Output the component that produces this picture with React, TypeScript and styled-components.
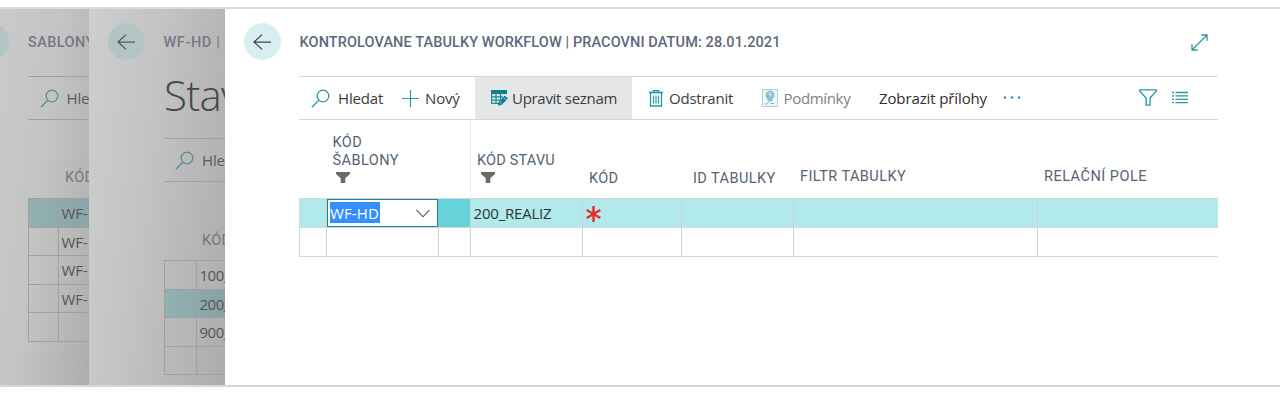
import React from 'react';
import styled, { createGlobalStyle } from 'styled-components';

const Global = createGlobalStyle`
  * { box-sizing: border-box; }
  body { margin: 0; background: #fff; }
`;

const ui = `'Open Sans', 'Noto Sans', sans-serif`;
const din = `Roboto, 'Liberation Sans', sans-serif`;

const Stage = styled.main`
  display: flex;
  width: 1280px;
  height: 380px;
  margin-top: 7px;
  border-top: 2px solid #dadada;
  border-bottom: 2px solid #d8d8d8;
  overflow: hidden;
  font-family: ${ui};
  font-size: 15px;
  color: #333;
`;

const Panel = styled.section<{ $width: number; $shade?: string; $inset: number }>`
  flex: none;
  width: ${p => p.$width}px;
  height: 376px;
  padding-left: ${p => p.$inset}px;
  overflow: hidden;
  background: ${p => p.$shade ?? '#fff'};
`;

const TopBar = styled.header<{ $gap: number; $pull: number }>`
  display: flex;
  align-items: center;
  height: 67px;
  margin-left: -${p => p.$pull}px;
  gap: ${p => p.$gap}px;
`;

const Back = styled.button<{ $dim?: boolean }>`
  flex: none;
  display: grid;
  place-items: center;
  width: 37px;
  height: 37px;
  margin-bottom: 2px;
  padding: 0;
  border: 0;
  border-radius: 50%;
  background: ${p => (p.$dim ? '#b3c4c5' : '#d8eff1')};
  color: ${p => (p.$dim ? '#565858' : '#444')};
`;

const Crumb = styled.h1<{ $dim?: boolean; $track?: number }>`
  flex: 1;
  margin: 0;
  font: 500 14.5px/20px ${din};
  letter-spacing: ${p => p.$track ?? 0}px;
  white-space: nowrap;
  color: ${p => (p.$dim ? '#747982' : '#5d697b')};
`;

const Expand = styled.span`
  display: flex;
  margin-right: 72px;
  color: #2a989e;
`;

const BigTitle = styled.h2`
  height: 62px;
  margin: 0;
  font: 300 42px/38px ${ui};
  letter-spacing: -0.7px;
  white-space: nowrap;
  color: #474747;
`;

const Toolbar = styled.nav<{ $dim?: boolean; $width?: number }>`
  display: flex;
  height: 44px;
  width: ${p => (p.$width ? p.$width + 'px' : 'auto')};
  border-top: 1px solid ${p => (p.$dim ? '#a0a0a0' : '#d4d5d9')};
  border-bottom: 1px solid ${p => (p.$dim ? '#a0a0a0' : '#d4d5d9')};
`;

const Action = styled.button<{ $width: number; $pad: number; $gap?: number; $active?: boolean; $color?: string; $track?: number }>`
  flex: none;
  display: flex;
  align-items: center;
  gap: ${p => p.$gap ?? 6}px;
  width: ${p => p.$width}px;
  padding: 0 0 0 ${p => p.$pad}px;
  border: 0;
  background: ${p => (p.$active ? '#e4e6e8' : 'transparent')};
  font: 15px/20px ${ui};
  letter-spacing: ${p => p.$track ?? 0}px;
  white-space: nowrap;
  color: ${p => p.$color ?? '#3c3c3c'};
  svg { flex: none; }
`;

const Tools = styled.div`
  display: flex;
  align-items: center;
  gap: 15px;
  margin-left: auto;
  padding-right: 30px;
  padding-bottom: 1px;
  color: #2a989e;
`;

const HeadRow = styled.div<{ $height: number }>`
  display: flex;
  height: ${p => p.$height}px;
`;

const Head = styled.div<{ $width: number; $pad?: number; $bottom: number; $rule?: boolean; $dim?: boolean; $track?: number }>`
  flex: none;
  display: flex;
  flex-direction: column;
  justify-content: flex-end;
  width: ${p => p.$width}px;
  padding: 0 0 ${p => p.$bottom}px ${p => p.$pad ?? 0}px;
  border-left: ${p => (p.$rule ? '1px solid #ededee' : '0')};
  font: 14.5px/18px ${din};
  letter-spacing: ${p => p.$track ?? 0}px;
  white-space: nowrap;
  color: ${p => (p.$dim ? '#717680' : '#566275')};
  svg { margin: 2px 0 0 3.5px; }
`;

const Grid = styled.div<{ $dim?: boolean; $width?: number }>`
  width: ${p => (p.$width ? p.$width + 'px' : 'auto')};
  border-top: 1px solid ${p => (p.$dim ? '#a0a0a0' : '#d6d7da')};
  border-left: 1px solid ${p => (p.$dim ? '#a0a0a0' : '#d6d7da')};
`;

const Row = styled.div<{ $fill?: string; $dim?: boolean; $height?: number }>`
  display: flex;
  height: ${p => p.$height ?? 28.5}px;
  background: ${p => p.$fill ?? 'transparent'};
  border-bottom: 1px solid ${p => (p.$dim ? '#a0a0a0' : '#d6d7da')};
`;

const Cell = styled.div<{ $width: number; $fill?: string; $dim?: boolean; $last?: boolean; $track?: number }>`
  flex: none;
  display: flex;
  align-items: center;
  width: ${p => p.$width}px;
  padding: ${p => (p.$dim ? 1 : 0)}px 0 ${p => (p.$dim ? 0 : 1)}px 2.5px;
  overflow: hidden;
  border-right: ${p => (p.$last ? '0' : `1px solid ${p.$dim ? '#a0a0a0' : '#cfd3d7'}`)};
  background: ${p => p.$fill ?? 'transparent'};
  letter-spacing: ${p => p.$track ?? 0}px;
  line-height: 20px;
  white-space: nowrap;
  color: ${p => (p.$dim ? '#555' : '#2b3538')};
  svg { margin-top: 2px; }
`;

const Combo = styled.div`
  flex: none;
  display: flex;
  align-items: center;
  justify-content: space-between;
  width: 111px;
  height: 28px;
  padding: 0 7px 0 2px;
  border: 1px solid #17868c;
  background: #fff;
  color: #555;
`;

const Selected = styled.span`
  width: 50px;
  height: 21px;
  margin-bottom: 1px;
  line-height: 22px;
  letter-spacing: 0.1px;
  white-space: nowrap;
  background: #3390ff;
  color: #fff;
`;

const ArrowIcon = () => (
  <svg width="18" height="16" viewBox="0 0 18 16" fill="none" stroke="currentColor" strokeWidth="1.25">
    <path d="M9 .6 1 8l8 7.4M1 8h17" />
  </svg>
);
const SearchIcon = ({ color = '#2a989e' }: { color?: string }) => (
  <svg width="19" height="19" viewBox="0 0 19 19" fill="none" stroke={color} strokeWidth="1.25">
    <circle cx="12" cy="7" r="5.8" />
    <path d="M7.8 11.2.8 18.2" />
  </svg>
);
const PlusIcon = () => (
  <svg width="17" height="17" viewBox="0 0 17 17" stroke="#2a989e" strokeWidth="1.2">
    <path d="M8.5 0v17M0 8.5h17" />
  </svg>
);
const EditListIcon = () => (
  <svg width="17" height="16" viewBox="0 0 17 16" fill="none">
    <path d="M0 0h16v4H0z" fill="#08828a" />
    <path d="M.6 3v10.4H8M0 6.9h12M0 10.2h9M5 3v10.4M9.5 3v7" stroke="#1c8c93" strokeWidth="1.2" />
    <path d="m7 15.8.9-4.1 5.9-6.2 3.1 3-6 6.3z" fill="#08828a" />
    <path d="m9 11.7 1.8 1.8M12.5 7.6l2.4 2.3" stroke="#e4e6e8" strokeWidth=".8" />
  </svg>
);
const TrashIcon = () => (
  <svg width="14" height="17" viewBox="0 0 14 17" fill="none" stroke="#2a989e">
    <path d="M0 2.5h14" strokeWidth="1.7" />
    <path d="M4.5 2V.6h5V2M1.5 3v13h11V3" strokeWidth="1.3" />
    <path d="M4.5 5.5v8M7 5.5v8M9.5 5.5v8" strokeWidth="1.2" />
  </svg>
);
const ConditionIcon = () => (
  <svg width="16" height="18" viewBox="0 0 16 18" fill="none">
    <path d="M.5.5h15v17H.5z" fill="#f1f8f9" stroke="#a9d0d5" />
    <circle cx="8" cy="6.2" r="4.6" fill="#8dc6cc" />
    <path d="M6 10.5h4v1.4H6zM3 14.6l1.5.7L7 12.6M8.5 14.5H12" stroke="#79b9c1" />
    <path d="M7.3 4.3 8.2 3.8v3" stroke="#e9f6f7" />
  </svg>
);
const DotsIcon = () => (
  <svg width="18" height="4" viewBox="0 0 18 4" fill="#2f86c6">
    <circle cx="2" cy="1.5" r="1.25" /><circle cx="9" cy="1.5" r="1.25" /><circle cx="16" cy="1.5" r="1.25" />
  </svg>
);
const FunnelIcon = () => (
  <svg width="18" height="17" viewBox="0 0 18 17" fill="none" stroke="currentColor" strokeWidth="1.3">
    <path d="M.7.8h16.6v1.5L11 9v7.2H7.2V9L.7 2.3z" />
  </svg>
);
const ListIcon = () => (
  <svg width="16" height="13" viewBox="0 0 16 13" stroke="currentColor" strokeWidth="1.3">
    <path d="M0 1.5h2M3.5 1.5H16M0 4.9h2M3.5 4.9H16M0 8.3h2M3.5 8.3H16M0 11.7h2M3.5 11.7H16" />
  </svg>
);
const ExpandIcon = () => (
  <svg width="17" height="17" viewBox="0 0 17 17" fill="none" stroke="currentColor" strokeWidth="1.3">
    <path d="M1 16 16 1M10.3 1H16v5.7M1 10.3V16h5.7" />
  </svg>
);
const FilterMark = () => (
  <svg width="14" height="11" viewBox="0 0 14 11" fill="#6b6b6b">
    <path d="M0 0h14v2L9.3 6.3V11H4.7V6.3L0 2z" />
  </svg>
);
const Chevron = () => (
  <svg width="14" height="9" viewBox="0 0 14 9" fill="none" stroke="currentColor" strokeWidth="1.1">
    <path d="m.5.8 6.5 7 6.5-7" />
  </svg>
);
const RequiredMark = () => (
  <svg width="15" height="16" viewBox="0 0 15 16" stroke="#e3302b" strokeWidth="2.5">
    <path d="M7.5 0v16M.7 4l13.6 8M14.3 4 .7 12" />
  </svg>
);

const columns = [27, 112, 32, 112, 99, 112, 244, 180];

export default function App() {
  return (
    <>
      <Global />
      <Stage>
        <Panel $width={89} $inset={28} $shade="linear-gradient(97deg, #cacaca 0%, #c4c4c4 45%, #b8b8b8 75%, #adadad 100%)">
          <TopBar $gap={19} $pull={56}>
            <Back $dim><ArrowIcon /></Back>
            <Crumb $dim $track={0.4}>SABLONY</Crumb>
          </TopBar>
          <Toolbar $dim>
            <Action $width={61} $pad={11.5} $gap={8} $track={-0.15} $color="#5a5a5a"><SearchIcon color="#4f8f93" />Hle</Action>
          </Toolbar>
          <HeadRow $height={78}>
            <Head $width={61} $pad={37} $bottom={11} $dim $track={0.3}>KÓD</Head>
          </HeadRow>
          <Grid $dim>
            {['WF-', 'WF-', 'WF-', 'WF-', ''].map((code, i) => (
              <Row key={i} $dim $fill={i === 0 ? 'linear-gradient(90deg, #92b1b3, #8aa5a7)' : undefined}>
                <Cell $width={30} $dim />
                <Cell $width={80} $dim>{code}</Cell>
              </Row>
            ))}
          </Grid>
        </Panel>

        <Panel $width={136} $inset={75} $shade="linear-gradient(97deg, #cecece 0%, #c3c3c3 42%, #b7b7b7 72%, #acacac 100%)">
          <TopBar $gap={19} $pull={56.5}>
            <Back $dim><ArrowIcon /></Back>
            <Crumb $dim $track={0.6}>WF-HD |</Crumb>
          </TopBar>
          <BigTitle>Stav</BigTitle>
          <Toolbar $dim>
            <Action $width={61} $pad={11} $gap={8} $track={-0.15} $color="#5a5a5a"><SearchIcon color="#4f8f93" />Hle</Action>
          </Toolbar>
          <HeadRow $height={78}>
            <Head $width={61} $pad={38} $bottom={10} $dim $track={0.3}>KÓD</Head>
          </HeadRow>
          <Grid $dim>
            {['100_', '200_', '900_', ''].map((code, i) => (
              <Row key={i} $dim $fill={i === 1 ? 'linear-gradient(90deg, #92b1b3, #88a2a4)' : undefined}>
                <Cell $width={32} $dim />
                <Cell $width={110} $dim $track={-0.5}>{code}</Cell>
              </Row>
            ))}
          </Grid>
        </Panel>

        <Panel $width={1055} $inset={74}>
          <TopBar $gap={19} $pull={55.5}>
            <Back><ArrowIcon /></Back>
            <Crumb $track={0.1}>KONTROLOVANE TABULKY WORKFLOW | PRACOVNI DATUM: 28.01.2021</Crumb>
            <Expand><ExpandIcon /></Expand>
          </TopBar>
          <Toolbar $width={919}>
            <Action $width={91} $pad={12} $gap={8} $track={-0.15}><SearchIcon />Hledat</Action>
            <Action $width={85} $pad={12} $track={-0.15}><PlusIcon />Nový</Action>
            <Action $width={157} $pad={16} $gap={4} $track={-0.29} $active><EditListIcon />Upravit seznam</Action>
            <Action $width={114} $pad={17} $track={-0.22}><TrashIcon />Odstranit</Action>
            <Action $width={121} $pad={16} $gap={5.5} $track={-0.33} $color="#7a7f86"><ConditionIcon />Podmínky</Action>
            <Action $width={156} $pad={12} $gap={15.5} $track={-0.12} $color="#2f2f2f">Zobrazit přílohy<DotsIcon /></Action>
            <Tools><FunnelIcon /><ListIcon /></Tools>
          </Toolbar>
          <HeadRow $height={78}>
            <Head $width={171} $pad={33.5} $bottom={15} $track={0.45}>KÓD<br />ŠABLONY<FilterMark /></Head>
            <Head $width={112} $pad={6} $bottom={15} $track={0.2} $rule>KÓD STAVU<FilterMark /></Head>
            <Head $width={99} $pad={7} $bottom={10} $track={0.3}>KÓD</Head>
            <Head $width={112} $pad={12} $bottom={10} $track={0.42}>ID TABULKY</Head>
            <Head $width={244} $pad={7} $bottom={12} $track={0.45}>FILTR TABULKY</Head>
            <Head $width={180} $pad={7} $bottom={12} $track={0.5}>RELAČNÍ POLE</Head>
          </HeadRow>
          <Grid $width={919}>
            <Row $fill="#b2e9eb" $height={29}>
              <Cell $width={27} />
              <Combo><Selected>WF-HD</Selected><Chevron /></Combo>
              <Cell $width={33} $fill="#66d3da" />
              <Cell $width={112} $track={-0.2}>200_REALIZ</Cell>
              <Cell $width={99}><RequiredMark /></Cell>
              <Cell $width={112} />
              <Cell $width={244} />
              <Cell $width={180} $last />
            </Row>
            <Row $height={29}>
              {columns.map((w, i) => <Cell key={i} $width={w} $last={i === columns.length - 1} />)}
            </Row>
          </Grid>
        </Panel>
      </Stage>
    </>
  );
}
